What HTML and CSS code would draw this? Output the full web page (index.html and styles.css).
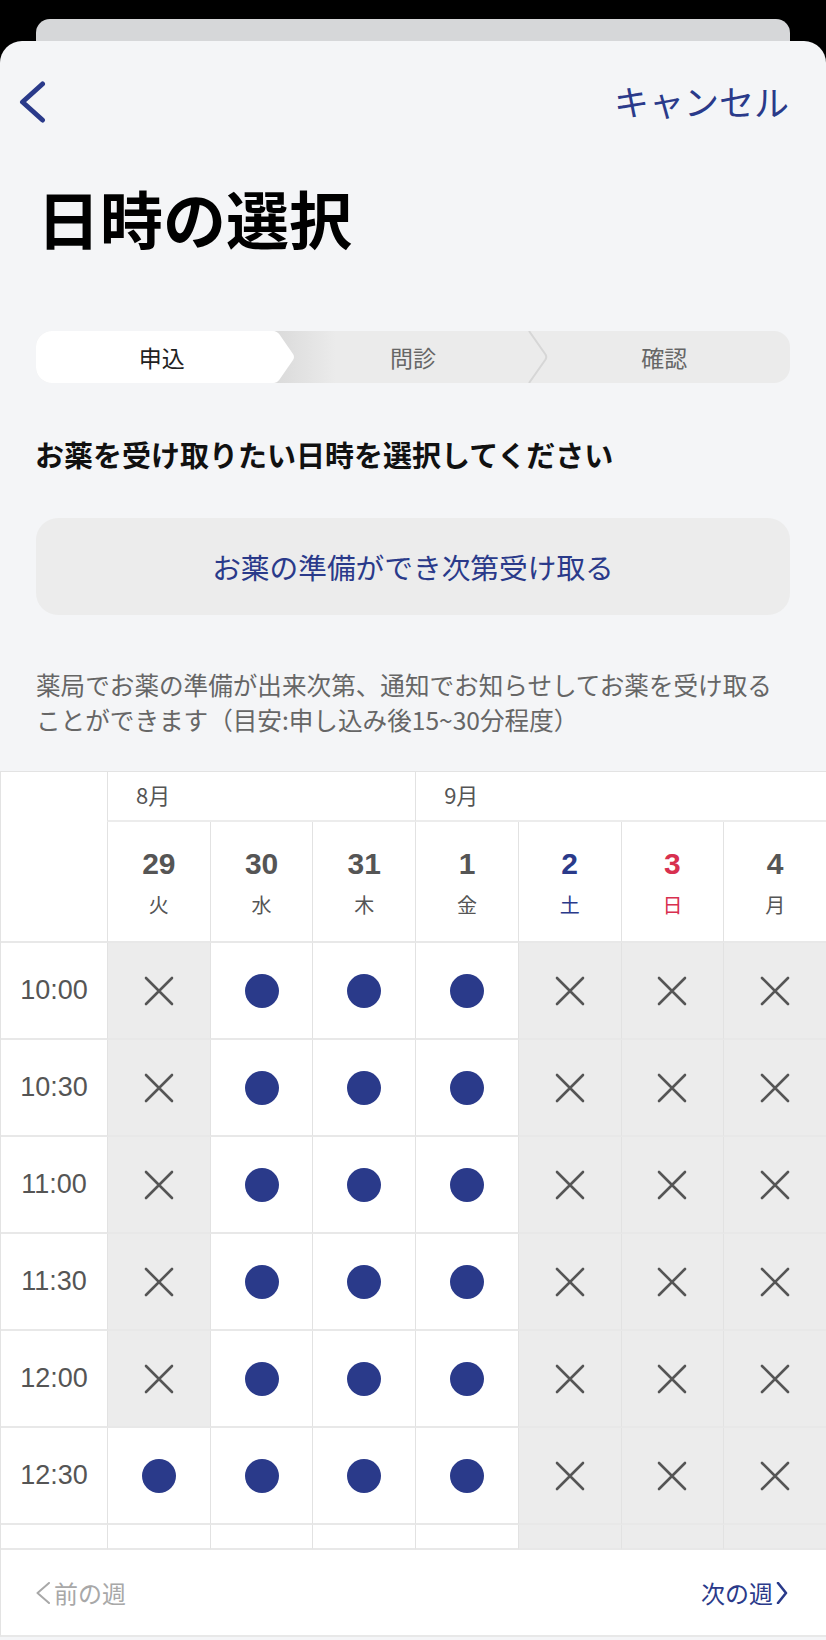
FILE: index.html
```html
<!DOCTYPE html>
<html lang="ja">
<head>
    <meta charset="UTF-8">
    <meta name="viewport" content="width=device-width, initial-scale=1.0">
    <title>日時の選択</title>
<link rel="stylesheet" href="styles.css">
</head>
<body>
  <div class="back_card"></div>
  <div class="sheet">
    <div class="topbar">
      <a class="back" href="#back">
        <svg width="32" height="44" viewBox="0 0 32 44"><path d="M26.5 3 L6.5 21 L26.5 39"/></svg>
      </a>
      <a class="cancel" href="#cancel">キャンセル</a>
    </div>

    <h1 class="title">日時の選択</h1>

    <!-- progress -->
    <div class="steps">
      <div class="step active">申込</div>
      <div class="step">問診</div>
      <div class="step">
        <svg class="step_sep" width="20" height="52" viewBox="0 0 20 52"><path d="M1 0 L17.5 23.5 Q19 26 17.5 28.5 L1 52"/></svg>
        確認
      </div>
    </div>

    <p class="lead">お薬を受け取りたい日時を選択してください</p>
    <button class="asap" type="button">お薬の準備ができ次第受け取る</button>
    <p class="note">薬局でお薬の準備が出来次第、通知でお知らせしてお薬を受け取る<br>ことができます（目安:申し込み後15~30分程度）</p>

    <!-- calendar -->
    <div class="calendar">
      <div class="corner"></div>
      <div class="month m8">8月</div>
      <div class="month m9">9月</div>

      <div class="day"><b>29</b><span>火</span></div>
      <div class="day"><b>30</b><span>水</span></div>
      <div class="day"><b>31</b><span>木</span></div>
      <div class="day"><b>1</b><span>金</span></div>
      <div class="day sat"><b>2</b><span>土</span></div>
      <div class="day sun"><b>3</b><span>日</span></div>
      <div class="day"><b>4</b><span>月</span></div>

      <div class="time">10:00</div>
      <div class="slot off"><svg class="x" viewBox="0 0 30 30"><path d="M2 2L28 28M28 2L2 28"/></svg></div>
      <div class="slot"><i class="dot"></i></div>
      <div class="slot"><i class="dot"></i></div>
      <div class="slot"><i class="dot"></i></div>
      <div class="slot off"><svg class="x" viewBox="0 0 30 30"><path d="M2 2L28 28M28 2L2 28"/></svg></div>
      <div class="slot off"><svg class="x" viewBox="0 0 30 30"><path d="M2 2L28 28M28 2L2 28"/></svg></div>
      <div class="slot off"><svg class="x" viewBox="0 0 30 30"><path d="M2 2L28 28M28 2L2 28"/></svg></div>

      <div class="time">10:30</div>
      <div class="slot off"><svg class="x" viewBox="0 0 30 30"><path d="M2 2L28 28M28 2L2 28"/></svg></div>
      <div class="slot"><i class="dot"></i></div>
      <div class="slot"><i class="dot"></i></div>
      <div class="slot"><i class="dot"></i></div>
      <div class="slot off"><svg class="x" viewBox="0 0 30 30"><path d="M2 2L28 28M28 2L2 28"/></svg></div>
      <div class="slot off"><svg class="x" viewBox="0 0 30 30"><path d="M2 2L28 28M28 2L2 28"/></svg></div>
      <div class="slot off"><svg class="x" viewBox="0 0 30 30"><path d="M2 2L28 28M28 2L2 28"/></svg></div>

      <div class="time">11:00</div>
      <div class="slot off"><svg class="x" viewBox="0 0 30 30"><path d="M2 2L28 28M28 2L2 28"/></svg></div>
      <div class="slot"><i class="dot"></i></div>
      <div class="slot"><i class="dot"></i></div>
      <div class="slot"><i class="dot"></i></div>
      <div class="slot off"><svg class="x" viewBox="0 0 30 30"><path d="M2 2L28 28M28 2L2 28"/></svg></div>
      <div class="slot off"><svg class="x" viewBox="0 0 30 30"><path d="M2 2L28 28M28 2L2 28"/></svg></div>
      <div class="slot off"><svg class="x" viewBox="0 0 30 30"><path d="M2 2L28 28M28 2L2 28"/></svg></div>

      <div class="time">11:30</div>
      <div class="slot off"><svg class="x" viewBox="0 0 30 30"><path d="M2 2L28 28M28 2L2 28"/></svg></div>
      <div class="slot"><i class="dot"></i></div>
      <div class="slot"><i class="dot"></i></div>
      <div class="slot"><i class="dot"></i></div>
      <div class="slot off"><svg class="x" viewBox="0 0 30 30"><path d="M2 2L28 28M28 2L2 28"/></svg></div>
      <div class="slot off"><svg class="x" viewBox="0 0 30 30"><path d="M2 2L28 28M28 2L2 28"/></svg></div>
      <div class="slot off"><svg class="x" viewBox="0 0 30 30"><path d="M2 2L28 28M28 2L2 28"/></svg></div>

      <div class="time">12:00</div>
      <div class="slot off"><svg class="x" viewBox="0 0 30 30"><path d="M2 2L28 28M28 2L2 28"/></svg></div>
      <div class="slot"><i class="dot"></i></div>
      <div class="slot"><i class="dot"></i></div>
      <div class="slot"><i class="dot"></i></div>
      <div class="slot off"><svg class="x" viewBox="0 0 30 30"><path d="M2 2L28 28M28 2L2 28"/></svg></div>
      <div class="slot off"><svg class="x" viewBox="0 0 30 30"><path d="M2 2L28 28M28 2L2 28"/></svg></div>
      <div class="slot off"><svg class="x" viewBox="0 0 30 30"><path d="M2 2L28 28M28 2L2 28"/></svg></div>

      <div class="time">12:30</div>
      <div class="slot"><i class="dot"></i></div>
      <div class="slot"><i class="dot"></i></div>
      <div class="slot"><i class="dot"></i></div>
      <div class="slot"><i class="dot"></i></div>
      <div class="slot off"><svg class="x" viewBox="0 0 30 30"><path d="M2 2L28 28M28 2L2 28"/></svg></div>
      <div class="slot off"><svg class="x" viewBox="0 0 30 30"><path d="M2 2L28 28M28 2L2 28"/></svg></div>
      <div class="slot off"><svg class="x" viewBox="0 0 30 30"><path d="M2 2L28 28M28 2L2 28"/></svg></div>

      <div class="time"></div>
      <div class="slot"></div>
      <div class="slot"></div>
      <div class="slot"></div>
      <div class="slot"></div>
      <div class="slot off"></div>
      <div class="slot off"></div>
      <div class="slot off"></div>
    </div>

    <div class="week_nav">
      <a class="prev" href="#prev">
        <svg width="16" height="22" viewBox="0 0 16 22"><path d="M14 1 L2.5 11 L14 21"/></svg>前の週
      </a>
      <a class="next" href="#next">次の週
        <svg width="12" height="22" viewBox="0 0 12 22"><path d="M2 1 L10 11 L2 21"/></svg>
      </a>
    </div>
  </div>
</body>
</html>
```

FILE: styles.css
```css
body {
  margin: 0;
  background: #000;
  font-family: "Noto Sans CJK JP", sans-serif;
  color: #111;
}
a {
  text-decoration: none;
}
.back_card {
  height: 22px;
  margin: 19px 36px 0;
  background: #d6d7d9;
  border-radius: 14px 14px 0 0;
}
.sheet {
  min-height: 1599px;
  padding-top: 40px;
  box-sizing: border-box;
  background: #f4f5f7;
  border-radius: 22px 22px 0 0;
}
.topbar {
  display: flex;
  justify-content: space-between;
  align-items: center;
  height: 44px;
  padding: 0 37px 0 16px;
}
.back svg {
  display: block;
}
.back path {
  fill: none;
  stroke: #2a3a8a;
  stroke-width: 5;
  stroke-linecap: round;
  stroke-linejoin: round;
}
.cancel {
  font-size: 35px;
  line-height: 35px;
  margin-bottom: 6px;
  color: #2a3a8a;
}
.title {
  margin: 61px 0 0 37px;
  font-size: 63px;
  line-height: 62px;
  font-weight: 700;
  color: #000;
}

/* progress */
.steps {
  display: flex;
  height: 52px;
  margin: 83px 36px 0;
  border-radius: 16px;
  overflow: hidden;
  background: linear-gradient(90deg, #ebebeb 0 239px, #dadada 239px, #ebebeb 300px);
}
.step {
  flex: 1;
  position: relative;
  display: flex;
  align-items: center;
  justify-content: center;
  font-size: 23px;
  line-height: 52px;
  color: #666;
}
.step.active {
  z-index: 0;
  color: #222;
}
.step.active::before {
  content: "";
  position: absolute;
  top: 0;
  left: 0;
  width: 259px;
  height: 52px;
  z-index: -1;
  background: #fff;
  clip-path: path("M0 0 H237 Q241 0 243.5 3.5 L257 23 Q259 26 257 29 L243.5 48.5 Q241 52 237 52 H0 Z");
}
.step_sep {
  position: absolute;
  top: 0;
  left: -11px;
}
.step_sep path {
  fill: none;
  stroke: #d6d6d6;
  stroke-width: 2;
}

.lead {
  margin: 53px 0 0 35px;
  font-size: 29px;
  line-height: 36px;
  font-weight: 700;
  color: #111;
}
.asap {
  display: block;
  width: calc(100% - 72px);
  height: 97px;
  margin: 46px 36px 0;
  border: none;
  border-radius: 22px;
  background: #ececec;
  font-family: "Noto Sans CJK JP", sans-serif;
  font-size: 28.7px;
  color: #2a3a8a;
}
.note {
  margin: 52px 0 0 36px;
  font-size: 24.6px;
  line-height: 35px;
  color: #666;
}

/* calendar */
.calendar {
  display: grid;
  grid-template-columns: 106px repeat(7, 1fr);
  grid-template-rows: 50px 121px repeat(6, 97px) 25px;
  margin-top: 34px;
  background: #fff;
  border-top: 1px solid #e3e3e3;
  border-left: 1px solid #e3e3e3;
}
.corner {
  grid-row: span 2;
  border-bottom: 2px solid #e8e8e8;
}
.month {
  display: flex;
  align-items: center;
  padding: 0 0 5px 28px;
  border-left: 1px solid #e2e2e2;
  border-bottom: 2px solid #ececec;
  font-size: 22px;
  color: #555;
}
.m8 {
  grid-column: span 3;
}
.m9 {
  grid-column: span 4;
}
.day {
  display: flex;
  flex-direction: column;
  align-items: center;
  padding-top: 24px;
  border-left: 1px solid #e2e2e2;
  border-bottom: 2px solid #e8e8e8;
  color: #555;
}
.day b {
  font-family: "Liberation Sans", sans-serif;
  font-size: 30px;
  line-height: 35px;
}
.day span {
  margin-top: 9px;
  font-size: 20px;
  line-height: 30px;
}
.day.sat {
  color: #2a3a8a;
}
.day.sun {
  color: #d8304f;
}
.time {
  display: flex;
  align-items: center;
  justify-content: center;
  border-bottom: 2px solid #e8e8e8;
  font-family: "Liberation Sans", sans-serif;
  font-size: 27px;
  color: #555;
}
.slot {
  display: flex;
  align-items: center;
  justify-content: center;
  border-left: 1px solid #e2e2e2;
  border-bottom: 2px solid #e8e8e8;
}
.slot.off {
  background: #ececec;
}
.x {
  width: 30px;
  height: 30px;
}
.x path {
  stroke: #555;
  stroke-width: 2.6;
  stroke-linecap: round;
}
.dot {
  width: 34px;
  height: 34px;
  border-radius: 50%;
  background: #2a3a8a;
}

.week_nav {
  display: flex;
  justify-content: space-between;
  align-items: center;
  height: 87px;
  padding: 0 38px 0 34px;
  box-sizing: border-box;
  background: #fff;
  border-left: 1px solid #e3e3e3;
  border-bottom: 2px solid #e8e8e8;
  font-size: 24px;
}
.week_nav a {
  display: flex;
  align-items: center;
  gap: 3px;
}
.week_nav path {
  fill: none;
  stroke-linecap: round;
  stroke-linejoin: round;
}
.prev {
  color: #a8a8a8;
}
.prev path {
  stroke: #a8a8a8;
  stroke-width: 2;
}
.next {
  color: #2a3a8a;
  gap: 8px;
}
.next path {
  stroke: #2a3a8a;
  stroke-width: 2.6;
}
```
